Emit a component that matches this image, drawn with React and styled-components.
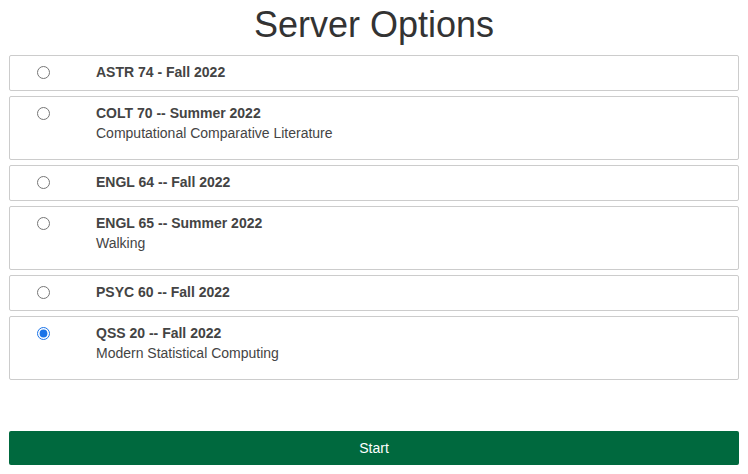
import { useState } from "react";
import styled, { createGlobalStyle } from "styled-components";

const GlobalStyle = createGlobalStyle`
  body {
    margin: 0;
    background: #fff;
    font-family: "Liberation Sans", Arial, sans-serif;
    color: #333;
  }
`;

const Page = styled.div`
  padding: 0 9px;
`;

const Title = styled.h1`
  margin: 0;
  padding-top: 5px;
  height: 50px;
  line-height: 40px;
  text-align: center;
  font-size: 36px;
  font-weight: 400;
  color: #333;
`;

const List = styled.div`
  display: flex;
  flex-direction: column;
  gap: 5px;
`;

const Card = styled.label`
  display: flex;
  border: 1px solid #ccc;
  border-radius: 2px;
  padding: 6px 0 ${(p) => (p.$tall ? "16px" : "8px")};
  cursor: pointer;
`;

const RadioCol = styled.div`
  width: 86px;
  flex-shrink: 0;
  display: flex;
  align-items: center;
  height: 20px;
  padding-left: 27px;
  box-sizing: border-box;
`;

const Radio = styled.input`
  margin: 0;
  width: 13px;
  height: 13px;
  accent-color: #1a73e8;
`;

const Body = styled.div`
  display: flex;
  flex-direction: column;
`;

const Name = styled.div`
  font-size: 14px;
  line-height: 20px;
  font-weight: 700;
  color: #444;
`;

const Desc = styled.div`
  font-size: 14px;
  line-height: 20px;
  color: #444;
`;

const StartButton = styled.button`
  display: block;
  width: 100%;
  margin-top: 51px;
  height: 34px;
  border: none;
  border-radius: 2px;
  background: #00693e;
  color: #fff;
  font-family: "Liberation Sans", Arial, sans-serif;
  font-size: 14px;
  cursor: pointer;
`;

const servers = [
  { id: "astr", name: "ASTR 74 - Fall 2022" },
  { id: "colt", name: "COLT 70 -- Summer 2022", desc: "Computational Comparative Literature" },
  { id: "engl64", name: "ENGL 64 -- Fall 2022" },
  { id: "engl65", name: "ENGL 65 -- Summer 2022", desc: "Walking" },
  { id: "psyc", name: "PSYC 60 -- Fall 2022" },
  { id: "qss", name: "QSS 20 -- Fall 2022", desc: "Modern Statistical Computing" },
];

const App = () => {
  const [selected, setSelected] = useState("qss");

  return (
    <>
      <GlobalStyle />
      <Page>
        <Title>Server Options</Title>
        <List>
          {servers.map((s) => (
            <Card key={s.id} $tall={!!s.desc}>
              <RadioCol>
                <Radio
                  type="radio"
                  name="server"
                  checked={selected === s.id}
                  onChange={() => setSelected(s.id)}
                />
              </RadioCol>
              <Body>
                <Name>{s.name}</Name>
                {s.desc && <Desc>{s.desc}</Desc>}
              </Body>
            </Card>
          ))}
        </List>
        <StartButton>Start</StartButton>
      </Page>
    </>
  );
};

export default App;
